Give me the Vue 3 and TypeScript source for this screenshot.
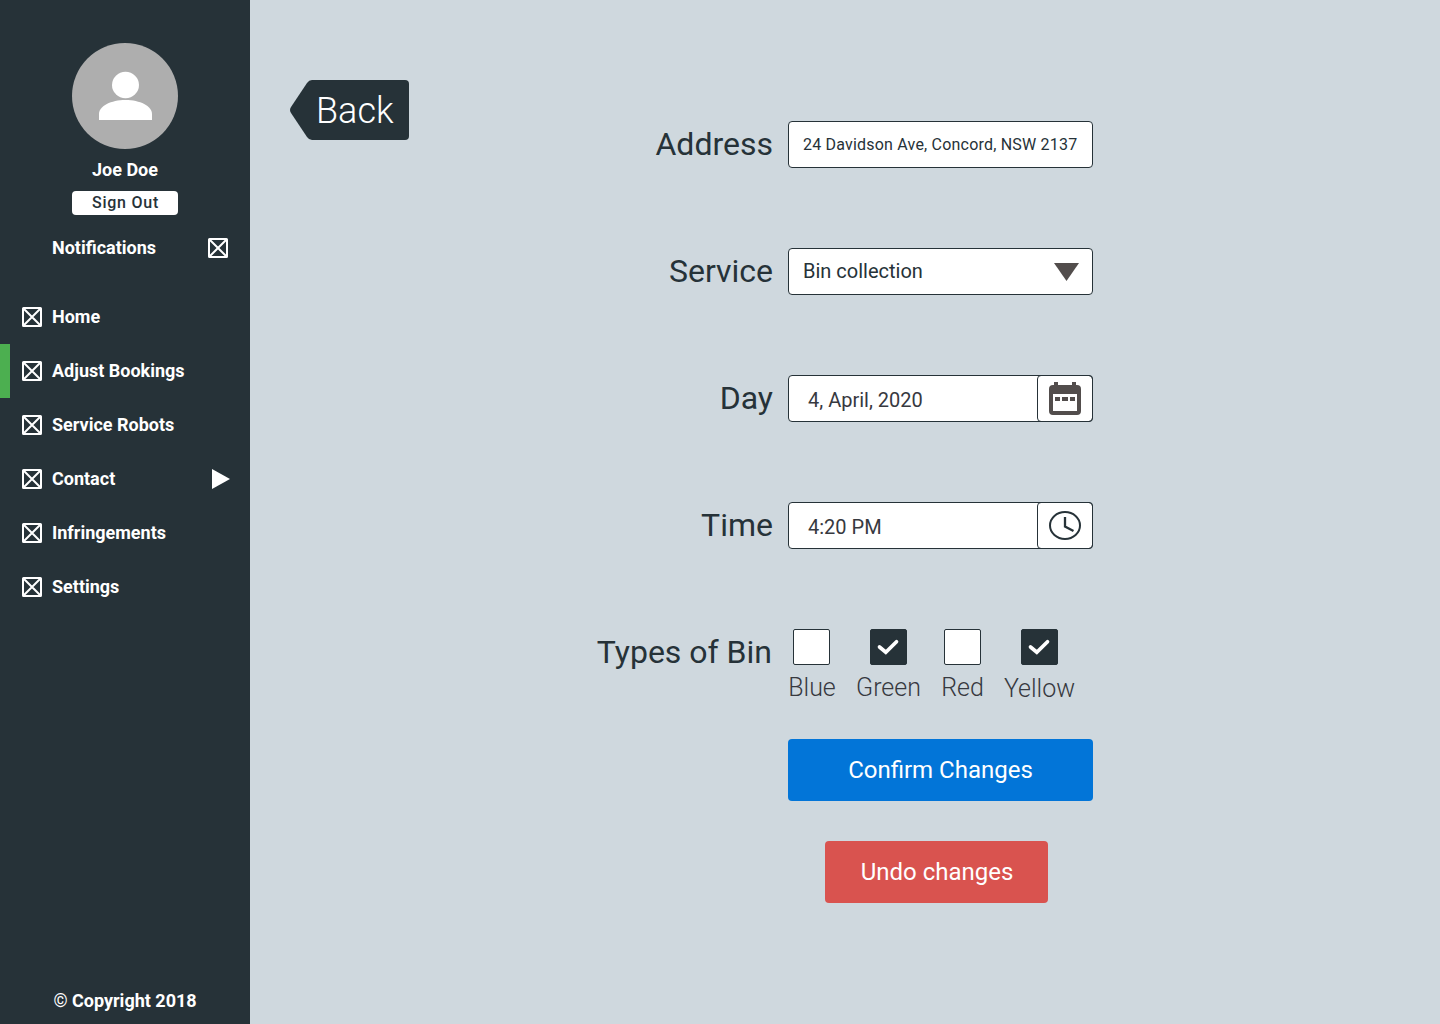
<script setup lang="ts">
interface NavItem {
  label: string
  active?: boolean
  expandable?: boolean
}

interface Bin {
  label: string
  checked: boolean
  width: number
}

const navItems: NavItem[] = [
  { label: 'Home' },
  { label: 'Adjust Bookings', active: true },
  { label: 'Service Robots' },
  { label: 'Contact', expandable: true },
  { label: 'Infringements' },
  { label: 'Settings' },
]

const bins: Bin[] = [
  { label: 'Blue', checked: false, width: 48 },
  { label: 'Green', checked: true, width: 65 },
  { label: 'Red', checked: false, width: 43 },
  { label: 'Yellow', checked: true, width: 71 },
]
</script>

<template>
  <div class="page">
    <aside class="sidebar">
      <svg class="avatar" viewBox="0 0 106 106">
        <circle cx="53" cy="53" r="53" fill="#aeaeae" />
        <ellipse cx="53.5" cy="42" rx="13.5" ry="13.2" fill="#fff" />
        <path d="M27 77V71C27 63 39 57 53.500 57S80 63 80 71V77Z" fill="#fff" />
      </svg>
      <div class="name">Joe Doe</div>
      <button class="sign-out">Sign Out</button>
      <div class="notifications">
        <span class="nav-label">Notifications</span>
        <svg class="box-icon" viewBox="0 0 20 20">
          <rect x="1" y="1" width="18" height="18" rx="0.500" />
          <path d="M2 2L18 18M18 2L2 18" />
        </svg>
      </div>
      <nav class="nav">
        <a v-for="item in navItems" :key="item.label" class="nav-item" :class="{ active: item.active }">
          <svg class="box-icon" viewBox="0 0 20 20">
            <rect x="1" y="1" width="18" height="18" rx="0.500" />
            <path d="M2 2L18 18M18 2L2 18" />
          </svg>
          <span class="nav-label">{{ item.label }}</span>
          <svg v-if="item.expandable" class="arrow" viewBox="0 0 18 20">
            <path d="M0 0L18 10L0 20Z" fill="#fff" />
          </svg>
        </a>
      </nav>
      <div class="copyright"><span class="mark">©</span> Copyright 2018</div>
    </aside>

    <main class="main">
      <button class="back">
        <svg class="back-shape" viewBox="0 0 119 60">
          <path d="M22 0H115Q119 0 119 4V56Q119 60 115 60H22Q19 60 17 57L1 33Q-1 30 1 27L17 3Q19 0 22 0Z" fill="#263238" />
        </svg>
        <span class="back-text">Back</span>
      </button>

      <form class="form" @submit.prevent>
        <div class="row">
          <label class="label">Address</label>
          <div class="field"><span class="address">24 Davidson Ave, Concord, NSW 2137</span></div>
        </div>
        <div class="row">
          <label class="label">Service</label>
          <div class="field">
            <span class="service">Bin collection</span>
            <svg class="caret" viewBox="0 0 25 18"><path d="M0 0H25L12.500 18Z" fill="#524d4c" /></svg>
          </div>
        </div>
        <div class="row">
          <label class="label">Day</label>
          <div class="field split">
            <span class="value">4, April, 2020</span>
            <span class="addon">
              <svg width="32" height="33" viewBox="0 0 32 33">
                <path fill="#524d4c" fill-rule="evenodd" d="M5 0H9V3H23V0H27V3H28Q32 3 32 7V29Q32 33 28 33H4Q0 33 0 29V7Q0 3 4 3H5ZM4 12V29H28V12Z" />
                <path fill="#524d4c" d="M6 15H11V19H6ZM13 15H19V19H13ZM21 15H26V19H21Z" />
              </svg>
            </span>
          </div>
        </div>
        <div class="row">
          <label class="label">Time</label>
          <div class="field split">
            <span class="value">4:20 PM</span>
            <span class="addon">
              <svg width="32" height="29" viewBox="0 0 32 29" fill="none" stroke="#263238" stroke-width="2">
                <ellipse cx="16" cy="14.500" rx="15" ry="13.400" />
                <path d="M16 6V15.500L24.500 20" stroke-width="2.300" />
              </svg>
            </span>
          </div>
        </div>
        <div class="row">
          <label class="label types">Types of Bin</label>
          <div class="bins">
            <div v-for="bin in bins" :key="bin.label" class="bin" :style="{ width: bin.width + 'px' }">
              <span class="check" :class="[bin.label.toLowerCase(), { checked: bin.checked }]">
                <svg v-if="bin.checked" width="37" height="36" viewBox="0 0 37 36">
                  <path d="M9.500 18L15.800 23.200L26.500 12.700" fill="none" stroke="#fff" stroke-width="3.700" stroke-linecap="round" />
                </svg>
              </span>
              <span class="bin-label" :class="bin.label.toLowerCase()">{{ bin.label }}</span>
            </div>
          </div>
        </div>
        <div class="actions">
          <button class="confirm">Confirm Changes</button>
          <button class="undo">Undo changes</button>
        </div>
      </form>
    </main>
  </div>
</template>

<style>
body {
  margin: 0;
}
</style>

<style scoped>
.page {
  display: flex;
  width: 1440px;
  height: 1024px;
  overflow: hidden;
  background: #cfd8de;
  color: #263238;
  font-family: Roboto, sans-serif;
}
button {
  border: 0;
  padding: 0;
  font-family: inherit;
}
.sidebar {
  display: flex;
  flex-direction: column;
  align-items: center;
  flex: none;
  box-sizing: border-box;
  width: 250px;
  height: 1024px;
  padding: 43px 0 12px;
  background: #263238;
  color: #fff;
  font-size: 18px;
  font-weight: 700;
  line-height: 22px;
}
.avatar {
  flex: none;
  width: 106px;
  height: 106px;
}
.name {
  margin-top: 10px;
}
.sign-out {
  flex: none;
  box-sizing: border-box;
  width: 106px;
  height: 24px;
  margin-top: 10px;
  padding-left: 1px;
  border-radius: 4px;
  background: #fff;
  color: #263238;
  font-size: 16px;
  font-weight: 500;
  letter-spacing: 0.75px;
  line-height: 24px;
}
.notifications {
  display: flex;
  align-items: center;
  box-sizing: border-box;
  width: 250px;
  height: 54px;
  margin-top: 6px;
  padding: 0 22px 0 52px;
}
.notifications .nav-label {
  flex: 1;
}
.box-icon {
  flex: none;
  width: 20px;
  height: 20px;
  fill: none;
  stroke: #fff;
  stroke-width: 2;
}
.nav {
  width: 250px;
  margin-top: 15px;
}
.nav-item {
  display: flex;
  align-items: center;
  box-sizing: border-box;
  height: 54px;
  padding: 0 20px 0 12px;
  border-left: 10px solid transparent;
}
.nav-item.active {
  border-left-color: #4caf50;
}
.nav-item .nav-label {
  flex: 1;
  margin-left: 10px;
}
.arrow {
  width: 18px;
  height: 20px;
}
.copyright {
  margin-top: auto;
}
.mark {
  font-weight: 400;
}
.main {
  display: flex;
  align-items: flex-start;
  flex: 1;
  padding-left: 40px;
}
.back {
  position: relative;
  flex: none;
  width: 119px;
  height: 60px;
  margin-top: 80px;
  background: none;
  color: #fff;
}
.back-shape {
  position: absolute;
  inset: 0;
  width: 119px;
  height: 60px;
}
.back-text {
  position: relative;
  display: block;
  height: 60px;
  padding-left: 26px;
  text-align: left;
  font-size: 36px;
  font-weight: 300;
  line-height: 62px;
}
.form {
  display: flex;
  flex-direction: column;
  gap: 80px;
  width: 503px;
  margin: 121px 0 0 181px;
}
.row {
  display: flex;
  gap: 15px;
  height: 47px;
}
.label {
  flex: none;
  box-sizing: border-box;
  width: 183px;
  text-align: right;
  white-space: nowrap;
  font-size: 32px;
  line-height: 46px;
}
.label.types {
  padding-right: 1px;
}
.field {
  display: flex;
  align-items: center;
  justify-content: space-between;
  box-sizing: border-box;
  width: 305px;
  height: 47px;
  padding: 0 13px 0 14px;
  border: 1px solid #263238;
  border-radius: 4px;
  background: #fff;
  white-space: nowrap;
}
.address {
  font-size: 16px;
  letter-spacing: 0.2px;
}
.service {
  padding-bottom: 2px;
  font-size: 20px;
}
.caret {
  width: 25px;
  height: 18px;
  margin-top: 1px;
}
.split {
  padding: 0 0 0 19px;
}
.value {
  padding-top: 2px;
  font-size: 20px;
  color: #37393f;
}
.addon {
  display: flex;
  align-items: center;
  justify-content: center;
  box-sizing: border-box;
  width: 56px;
  height: 47px;
  margin-right: -1px;
  border: 1px solid #263238;
  border-radius: 4px;
}
.bins {
  display: flex;
  gap: 20px;
}
.bin {
  display: flex;
  flex-direction: column;
  align-items: center;
}
.check {
  flex: none;
  box-sizing: border-box;
  width: 37px;
  height: 36px;
  border: 1px solid #263238;
  border-radius: 2px;
  background: #fff;
}
.check.blue {
  margin-right: 1px;
}
.check svg {
  display: block;
  margin: -1px;
}
.check.checked {
  background: #263238;
}
.bin-label {
  margin-top: 8px;
  color: #37393f;
  font-size: 25px;
  font-weight: 300;
  line-height: 30px;
}
.bin-label.yellow {
  margin-top: 9px;
}
.actions {
  display: flex;
  flex-direction: column;
  gap: 40px;
  width: 305px;
  margin: -17px 0 0 198px;
}
.actions button {
  height: 62px;
  border-radius: 4px;
  color: #fff;
  font-size: 24px;
  line-height: 62px;
}
.confirm {
  width: 305px;
  background: #0275d8;
}
.actions .undo {
  box-sizing: border-box;
  width: 223px;
  margin-left: 37px;
  padding-left: 1px;
  background: #d9534f;
}
</style>
